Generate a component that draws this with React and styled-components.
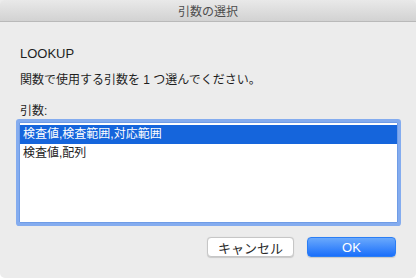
import React, { useState } from "react";
import styled, { createGlobalStyle } from "styled-components";

const GlobalStyle = createGlobalStyle`
html, body {
    margin: 0;
    padding: 0;
    background: #ffffff;
}
body {
    font-family: "Helvetica Neue", "Liberation Sans", "Noto Sans CJK JP", sans-serif;
    -webkit-font-smoothing: antialiased;
}
`;

const Window = styled.div`
width: 416px;
height: 278px;
background-color: #ececec;
border-radius: 0 0 5px 5px;
overflow: hidden;
display: flex;
flex-direction: column;
`;

const TitleBar = styled.div`
height: 21px;
border-bottom: 1px solid #b9b9b9;
background: linear-gradient(#e9e9e9, #d2d2d2);
border-radius: 5px 5px 0 0;
display: flex;
align-items: center;
justify-content: center;
font-size: 12px;
color: #4d4d4d;
`;

const Body = styled.div`
flex: 1;
display: flex;
flex-direction: column;
padding: 24px 17px 0 17px;
`;

const Text = styled.div`
font-size: ${props => props.size || 13}px;
color: #1e1e1e;
padding-left: 3px;
line-height: 16px;
margin-bottom: ${props => props.gap || 0}px;
`;

const ListBox = styled.div`
height: 97px;
background: #ffffff;
border: 1px solid #6f9ce6;
box-shadow: 0 0 0 3px #84acef;
margin: 3px 0 0 2px;
width: 377px;
padding-top: 2px;
border-radius: 1px;
`;

const Item = styled.div`
height: 19px;
line-height: 19px;
font-size: 12px;
padding-left: 3px;
color: ${props => (props.selected ? "#ffffff" : "#222222")};
background: ${props => (props.selected ? "#1565dc" : "transparent")};
cursor: default;
`;

const ButtonRow = styled.div`
display: flex;
justify-content: flex-end;
gap: 13px;
margin-top: 14px;
padding-right: 3px;
`;

const Button = styled.button`
width: ${props => props.w}px;
height: 20px;
border-radius: 4px;
font-family: inherit;
font-size: 13px;
padding: 0;
display: flex;
align-items: center;
justify-content: center;
color: ${props => (props.primary ? "#ffffff" : "#2a2a2a")};
border: 1px solid ${props => (props.primary ? "#2b7ef5" : "#c6c6c6")};
background: ${props =>
    props.primary ? "linear-gradient(#6aa9fc, #1a6ffb)" : "#ffffff"};
box-shadow: 0 0.5px 1px rgba(0, 0, 0, 0.15);
`;

const items = ["検査値,検査範囲,対応範囲", "検査値,配列"];

export default function App() {
    const [selected, setSelected] = useState(0);
    return (
        <>
            <GlobalStyle />
            <Window>
                <TitleBar>引数の選択</TitleBar>
                <Body>
                    <Text gap={10}>LOOKUP</Text>
                    <Text size={12} gap={15}>関数で使用する引数を 1 つ選んでください。</Text>
                    <Text size={12}>引数:</Text>
                    <ListBox>
                        {items.map((it, i) => (
                            <Item key={it} selected={i === selected} onClick={() => setSelected(i)}>
                                {it}
                            </Item>
                        ))}
                    </ListBox>
                    <ButtonRow>
                        <Button w={87}>キャンセル</Button>
                        <Button w={89} primary>OK</Button>
                    </ButtonRow>
                </Body>
            </Window>
        </>
    );
}
